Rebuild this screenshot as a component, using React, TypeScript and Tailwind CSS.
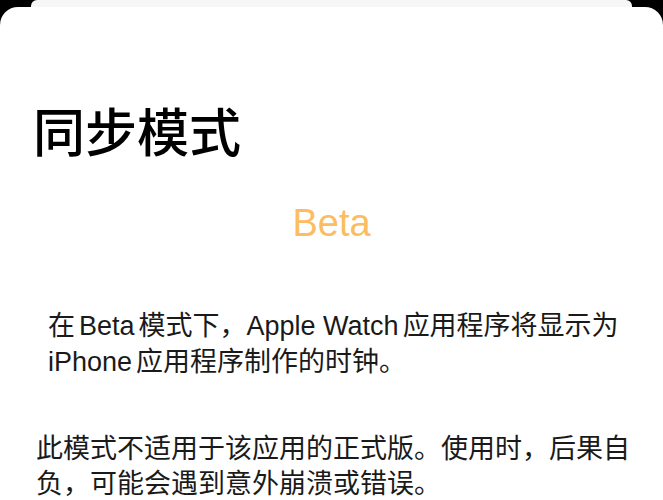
export default function App() {
  const font = { fontFamily: '"Liberation Sans", "Noto Sans CJK SC", sans-serif' };
  return (
    <div className="w-[663px] h-[500px] bg-black overflow-hidden flex flex-col" style={font}>
      <div className="mx-[31px] h-[7px] shrink-0 bg-[#f6f6f6] rounded-t-[6px]" />
      <div className="flex-1 bg-white rounded-t-[18px] flex flex-col">
        <h1 className="mt-[97px] pl-[33px] text-[52px] leading-[52px] font-medium text-black" style={{ fontFamily: '"Noto Sans CJK SC", sans-serif' }}>
          同步模式
        </h1>
        <div className="mt-[48px] text-center text-[38px] leading-[38px] text-[#fbbd5f]">Beta</div>
        <p className="mt-[66px] pl-[48px] text-[27px] leading-[36px] text-[#1a1a1a] whitespace-nowrap">
          在<span className="ml-[4px]">Beta</span><span className="ml-[4px]">模式下，Apple Watch</span><span className="ml-[4px]">应用程序将显示为</span>
          <br />
          iPhone<span className="ml-[4px]">应用程序制作的时钟。</span>
        </p>
        <p className="mt-[52px] pl-[36px] text-[27px] leading-[35px] text-[#1a1a1a] whitespace-nowrap">
          此模式不适用于该应用的正式版。使用时，后果自
          <br />
          负，可能会遇到意外崩溃或错误。
        </p>
      </div>
    </div>
  );
}
